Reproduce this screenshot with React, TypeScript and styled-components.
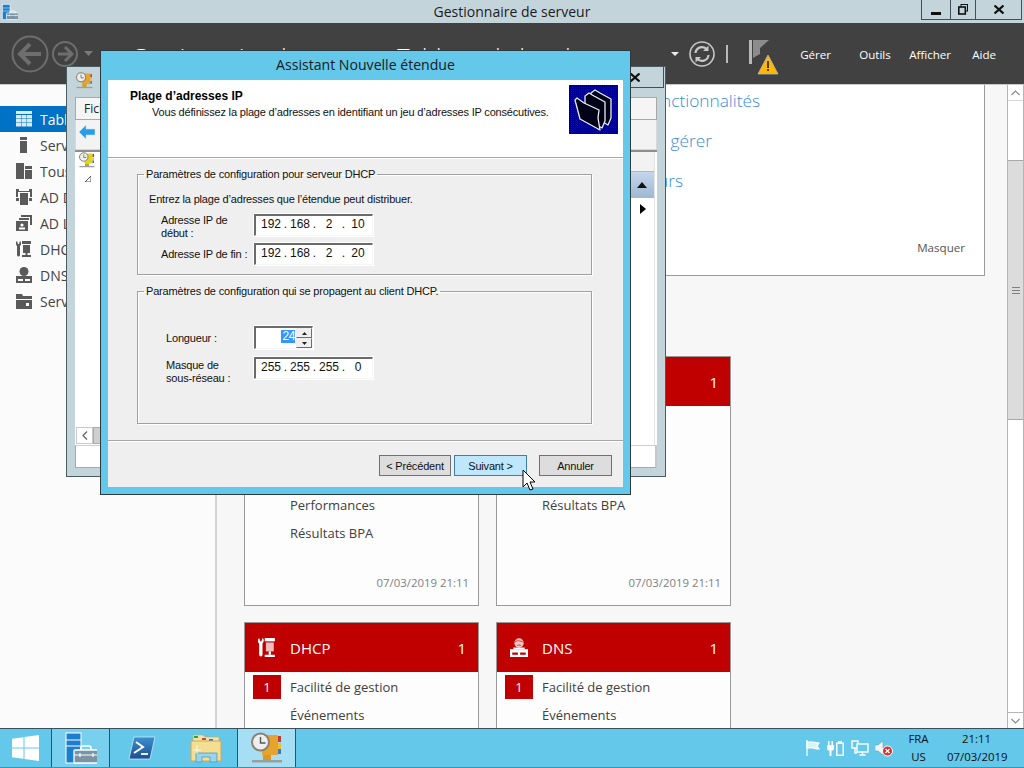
import React from "react";
import styled, { createGlobalStyle } from "styled-components";

const UI = `"Open Sans", "Noto Sans", sans-serif`;
const DLG = `"Liberation Sans", Arial, sans-serif`;

const Global = createGlobalStyle`
  html, body { margin: 0; padding: 0; overflow: hidden; background: #f7f7f7; }
  #root { width: 1024px; height: 768px; }
  * { box-sizing: border-box; }
`;

const Desktop = styled.div`
  position: relative; width: 1024px; height: 768px; overflow: hidden;
  display: flex; flex-direction: column; font-family: ${UI};
`;
const TitleBar = styled.header`
  height: 23px; flex: none; background: #c3d5db; display: grid;
  grid-template-columns: 1fr auto 1fr; align-items: start; color: #1c1c1c;
`;
const TitleIcon = styled.div` padding: 3px 0 0 2px; height: 20px; `;
const TitleText = styled.div` font-size: 14px; line-height: 24px; `;
const Controls = styled.div`
  justify-self: end; margin-right: 2px; height: 20px; display: flex;
  border: 1px solid #3f5058; border-top: 0; color: #111;
`;
const ControlBtn = styled.div<{ $w: number }>`
  width: ${p => p.$w}px; display: flex; align-items: center; justify-content: center;
  & + & { border-left: 1px solid #3f5058; }
`;
const NavBar = styled.nav`
  height: 62px; flex: none; background: #414141; display: flex; align-items: center;
  padding: 0 28px 0 11px; border-bottom: 1px solid #c8c8c8; overflow: hidden;
`;
const NavTitle = styled.div`
  margin-left: 38px; font-size: 23.5px; font-weight: 300; color: #fff; white-space: nowrap;
  display: flex; gap: 12px; line-height: 30px; padding-top: 6px;
`;
const NavRight = styled.div` margin-left: auto; display: flex; align-items: center; `;
const NavCaret = styled.svg` margin-right: 10px; `;
const Divider = styled.div` width: 2px; height: 18px; background: #b9b9b9; margin: 0 21px 0 11px; `;
const FlagIcon = styled.svg` margin-top: 8px; `;
const NavMenu = styled.div`
  display: grid; grid-template-columns: 59px 50px 63px auto; margin-left: 21px; padding-top: 2px;
  color: #fff; font-size: 11.6px;
`;
const Main = styled.div` flex: 1; min-height: 0; display: flex; overflow: hidden; background: #f7f7f7; `;
const Sidebar = styled.aside`
  width: 217px; flex: none; background: #fbfbfb; padding-top: 21px;
  border-right: 2px solid #d2d2d2;
`;
const SideItem = styled.div<{ $active?: boolean }>`
  height: 26px; display: flex; align-items: center; gap: 8px; padding-left: 16px;
  font-size: 14px; white-space: nowrap; overflow: hidden;
  background: ${p => (p.$active ? "#0072c6" : "transparent")};
  color: ${p => (p.$active ? "#fff" : "#444")};
`;
const Content = styled.main` flex: 1; min-width: 0; overflow: hidden; `;
const Welcome = styled.section`
  width: 768px; height: 191px; background: #fff;
  border-right: 1px solid #9a9a9a; border-bottom: 1px solid #9a9a9a;
  display: flex; flex-direction: column; padding-top: 2px; position: relative;
`;
const WelcomeLine = styled.div<{ $end: number }>`
  width: ${p => p.$end}px; height: 40px; line-height: 28px; text-align: right; white-space: nowrap;
  font-size: 17.3px; font-weight: 300; color: #3b8edb;
`;
const HideLink = styled.div`
  margin-top: auto; margin-bottom: 20px; align-self: flex-end; padding-right: 19px;
  font-size: 11.6px; color: #555;
`;
const CardGrid = styled.div`
  display: grid; grid-template-columns: 235px 235px; column-gap: 17px; row-gap: 16px;
  margin: 80px 0 0 27px;
`;
const Card = styled.article`
  height: 250px; background: #fdfdfd; border: 1px solid #999; display: flex; flex-direction: column;
  position: relative;
`;
const CardHead = styled.div`
  height: 49px; flex: none; background: #c00000; color: #fff; display: flex; align-items: center;
  padding: 0 12px 0 13px; font-size: 15px;
`;
const CardIconSlot = styled.span` width: 18px; flex: none; display: flex; `;
const CardTitle = styled.span` margin-left: 14px; flex: 1; `;
const CardRows = styled.div` padding: 1px 0 0 8px; `;
const CardRow = styled.div`
  height: 28px; display: flex; align-items: center; gap: 9px; padding-left: 37px; position: relative;
  font-size: 13px; color: #404040;
`;
const Badge = styled.span`
  position: absolute; left: 0; top: 2px; width: 28px; height: 24px; background: #c00000; color: #fff;
  display: flex; align-items: center; justify-content: center; font-size: 13px;
`;
const Stamp = styled.div`
  margin-top: auto; margin-bottom: 15px; align-self: flex-end; padding-right: 9px;
  font-size: 11.4px; color: #808080;
`;
const Scrollbar = styled.div`
  width: 17px; flex: none; background: #fff; border-left: 1px solid #b5b5b5; border-right: 1px solid #b5b5b5;
  display: flex; flex-direction: column;
`;
const ScrollBtn = styled.div<{ $end?: boolean }>`
  height: 16px; flex: none; display: flex; align-items: center; justify-content: center;
  ${p => (p.$end ? "margin-top: auto; border-top: 1px solid #b5b5b5;" : "border-bottom: 1px solid #d8d8d8;")}
`;
const ScrollGap = styled.div<{ $h: number }>` height: ${p => p.$h}px; flex: none; `;
const ScrollThumb = styled.div`
  height: 260px; background: #dcdcdc; border-top: 1px solid #a8a8a8; border-bottom: 1px solid #a8a8a8; flex: none;
  display: flex; align-items: center; justify-content: center;
`;
const Grip = styled.div`
  width: 8px; height: 7px;
  border-top: 1px solid #808080; border-bottom: 1px solid #808080; position: relative;
  &::after { content: ""; position: absolute; left: 0; right: 0; top: 2px; height: 1px; background: #808080; }
`;
const Taskbar = styled.footer`
  height: 40px; flex: none; background: #64c8ea; border-top: 1px solid #39505a; border-bottom: 1px solid #4b8ca4;
  display: flex; align-items: stretch; color: #111;
`;
const TaskSlot = styled.div<{ $w: number; $state?: "hover" | "active" }>`
  width: ${p => p.$w}px; flex: none; display: flex; align-items: center; justify-content: center;
  background: ${p => (p.$state === "active" ? "#a6dff3" : p.$state === "hover" ? "#78d0ee" : "transparent")};
  ${p => (p.$state ? "box-shadow: inset 1px 0 0 #39505a, inset -1px 0 0 #39505a;" : "")}
`;
const Tray = styled.div` margin-left: auto; display: flex; align-items: center; gap: 6px; `;
const TrayClock = styled.div`
  display: flex; font-size: 11.4px; line-height: 18px; text-align: center; margin-left: 8px; margin-right: 18px;
`;
const TrayLang = styled.div` width: 23px; margin-right: 17px; `;
const TrayTime = styled.div` width: 59px; white-space: nowrap; `;

/* ---------- background MMC ---------- */
const Mmc = styled.section`
  position: absolute; left: 66px; top: 66px; width: 600px; height: 411px; background: #c3d5db;
  border: 1px solid #4b5b62; display: flex; flex-direction: column; padding: 0 8px 8px;
`;
const MmcTop = styled.div` height: 30px; flex: none; display: flex; justify-content: space-between; padding: 5px 0 0 1px; `;
const MmcClose = styled.div`
  width: 58px; height: 21px; margin: -5px -7px 0 0; border: 1px solid #3f5058; border-top: 0;
  display: flex; align-items: center; justify-content: center;
`;
const MmcMenu = styled.div`
  height: 23px; flex: none; background: #f5f5f5; border: 1px solid #a8a8a8; padding: 2px 8px;
  font-size: 12px; color: #222;
`;
const MmcTools = styled.div`
  height: 30px; flex: none; background: #f3f3f3; padding: 5px 3px; border: 1px solid #d8d8d8; border-top: 0;
  & > svg { display: block; }
`;
const MmcPanes = styled.div`
  flex: 1; min-height: 0; display: flex; background: #fff; border-top: 2px solid #8e8e8e;
`;
const TreePane = styled.div` flex: 1; display: flex; flex-direction: column; padding: 0 0 0 4px; `;
const TreeSpacer = styled.div` flex: 1; padding: 8px 0 0 6px; & > svg { display: block; } `;
const HScroll = styled.div` height: 17px; flex: none; margin: 0 0 1px -3px; display: flex; `;
const HScrollBtn = styled.div`
  width: 17px; background: #fff; border: 1px solid #c9c9c9; display: flex; align-items: center; justify-content: center;
`;
const HScrollThumb = styled.div` width: 300px; background: #cfcfcf; border: 1px solid #aaa; `;
const ActionsPane = styled.div`
  width: 120px; flex: none; display: flex; flex-direction: column; border-right: 1px solid #e4e4e4;
  margin-right: 2px; font-size: 12px;
`;
const ActionsHead = styled.div` height: 20px; background: #f2f2f2; border-bottom: 1px solid #b5b5b5; `;
const ActionsRow = styled.div<{ $sel?: boolean }>`
  height: ${p => (p.$sel ? 26 : 22)}px; display: flex; align-items: center; justify-content: flex-end;
  padding-right: ${p => (p.$sel ? 7 : 8)}px;
  background: ${p => (p.$sel ? "linear-gradient(#c4d6ec, #9fb7d3)" : "#fff")};
`;
const Status = styled.div`
  height: 23px; flex: none; margin-top: 0; background: #fff; border: 1px solid #a8a8a8; border-top-color: #cfcfcf;
  border-right: 2px solid #c8c8c8;
`;

/* ---------- dialog ---------- */
const Dialog = styled.section`
  position: absolute; left: 100px; top: 50px; width: 531px; height: 445px; background: #64c8ea;
  border: 1px solid #2c3a40; display: flex; flex-direction: column; padding: 0 7px 7px;
  font-family: ${DLG}; font-size: 11px; letter-spacing: -0.18px; color: #111;
`;
const DlgTitle = styled.div` height: 29px; flex: none; line-height: 28px; text-align: center; font-family: ${UI}; font-size: 14.1px; letter-spacing: 0; color: #1a1a1a; `;
const DlgClient = styled.div` flex: 1; min-height: 0; background: #efefef; display: flex; flex-direction: column; `;
const DlgHeader = styled.div`
  height: 78px; flex: none; background: #fff; display: flex; justify-content: space-between;
  padding: 5px 5px 0 22px; border-bottom: 1px solid #a6a6a6; box-shadow: 0 1px 0 #fff;
  & > svg { flex: none; }
`;
const DlgHeadText = styled.div` padding-top: 4px; `;
const DlgHeadTitle = styled.div` font-weight: 700; font-size: 12px; letter-spacing: 0; line-height: 15px; color: #000; `;
const DlgHeadSub = styled.div` padding-left: 22px; line-height: 17px; white-space: nowrap; `;
const DlgBody = styled.div` flex: 1; padding: 10px 31px 0 29px; display: flex; flex-direction: column; gap: 10px; `;
const Group = styled.fieldset<{ $h: number }>`
  margin: 0; height: ${p => p.$h}px; padding: 0 0 0 11px; min-width: 0;
  border: 1px solid #a0a0a0; box-shadow: 1px 1px 0 #fff, inset 1px 1px 0 #fff;
`;
const GroupLegend = styled.legend` margin-left: -5px; padding: 0 2px; line-height: 13px; white-space: nowrap; `;
const Hint = styled.div` margin-top: 12px; line-height: 13px; `;
const FormRow = styled.div<{ $top: number; $indent: number; $center?: boolean }>`
  margin-top: ${p => p.$top}px; display: grid; grid-template-columns: 105px auto; justify-content: start;
  align-items: ${p => (p.$center ? "center" : "start")};
  & > label { padding-left: ${p => p.$indent}px; }
`;
const FieldLabel = styled.label<{ $pad?: number }>`
  line-height: 13px; height: 22px; white-space: pre-line; padding-top: ${p => p.$pad ?? 0}px;
`;
const FieldLabelCenter = styled.label` line-height: 13.5px; padding-top: 2px; white-space: nowrap; `;
const IpBox = styled.div`
  width: 119px; height: 22px; background: #fff; display: flex; align-items: center; padding: 0 0 3px 3px;
  border-style: solid; border-color: #6b6b6b #f6f6f6 #f6f6f6 #6b6b6b; border-width: 2px 1px 1px 2px;
  outline: 1px solid #fff; font-size: 12px; letter-spacing: 0;
`;
const IpSeg = styled.span` width: 24px; text-align: center; `;
const IpDot = styled.span` width: 5px; text-align: center; `;
const SpinBox = styled.div`
  width: 59px; height: 23px; background: #fff; display: flex; justify-content: flex-end; position: relative;
  border-style: solid; border-color: #6b6b6b #f6f6f6 #f6f6f6 #6b6b6b; border-width: 2px 1px 1px 2px;
  outline: 1px solid #fff; font-size: 12px; letter-spacing: -0.4px;
`;
const SpinValue = styled.span` height: 13px; line-height: 13px; padding: 0 0 0 1px; background: #3399ff; color: #fff; margin-top: 2px; `;
const SpinBtns = styled.div` width: 16px; flex: none; margin-left: 1px; display: flex; flex-direction: column; `;
const SpinBtn = styled.div`
  flex: 1; background: #f0f0f0; border: 1px solid #6e6e6e; border-top-color: #eee; border-left-color: #eee;
  display: flex; align-items: center; justify-content: center;
`;
const DlgFooter = styled.div`
  height: 47px; flex: none; border-top: 1px solid #a6a6a6; box-shadow: inset 0 1px 0 #fff;
  display: flex; justify-content: flex-end; align-items: flex-start; padding: 14px 11px 0 0;
`;
const DlgBtn = styled.div<{ $w: number; $gap: number; $hot?: boolean }>`
  width: ${p => p.$w}px; height: 21px; margin-left: ${p => p.$gap}px; display: flex; align-items: center; justify-content: center;
  background: ${p => (p.$hot ? "#bee6fd" : "#dddddd")}; border: 1px solid ${p => (p.$hot ? "#3c7fb1" : "#707070")};
`;
const Pointer = styled.svg` position: absolute; left: 522px; top: 469px; `;

/* ---------- drawings ---------- */
const ServerMgrIcon = ({ s }: { s: number }) => (
  <svg width={s} height={s} viewBox="0 0 32 32">
    <rect x="1" y="1" width="15" height="30" fill="#1a7fd0" stroke="#fff" strokeWidth="1" />
    <path d="M1 8h15M1 14h15" stroke="#fff" strokeWidth="1" />
    <path d="M16 19v-3a2 2 0 0 1 2-2h6a2 2 0 0 1 2 2v3" fill="none" stroke="#fff" strokeWidth="1.6" />
    <rect x="9" y="18" width="25" height="13" rx="1" fill="#7a93a5" stroke="#fff" strokeWidth="1.3" />
    <path d="M9 23h25M15 21v4M28 21v4" stroke="#fff" strokeWidth="1.2" />
  </svg>
);
const ClockBook = ({ s, tint = "#e6a32e" }: { s: number; tint?: string }) => (
  <svg width={s} height={s} viewBox="0 0 32 32" style={{ flex: "none" }}>
    <rect x="11" y="3" width="16" height="20" rx="1" fill={tint} />
    <rect x="27" y="4" width="3" height="6" fill="#c63a2d" />
    <rect x="27" y="11" width="3" height="6" fill="#e7c12f" />
    <rect x="27" y="17" width="3" height="5" fill="#3d76c5" />
    <circle cx="9.500" cy="10" r="8.500" fill="#eee" stroke="#8a8172" strokeWidth="2" />
    <path d="M9.500 5v6h5" stroke="#555" strokeWidth="1.400" fill="none" />
    <rect x="12" y="23" width="8" height="5" fill="#d79b24" />
    <rect x="1" y="28" width="30" height="2.500" fill="#9aa0a0" />
  </svg>
);
const Ico = ({ children }: { children: React.ReactNode }) => (
  <svg width="16" height="16" viewBox="0 0 16 16" fill="#5a5a5a" style={{ flex: "none" }}>{children}</svg>
);
const SideIcons: React.ReactNode[] = [
  <svg key="0" width="16" height="16" viewBox="0 0 16 16" fill="#dce9f5" style={{ flex: "none" }}><rect y="0" width="16" height="3" /><path d="M0 4h5v3.500H0zM5.500 4h5v3.500h-5zM11 4h5v3.500h-5zM0 8h5v3.500H0zM5.500 8h5v3.500h-5zM11 8h5v3.500h-5zM0 12h5v3.500H0zM5.500 12h5v3.500h-5zM11 12h5v3.500h-5z" /></svg>,
  <Ico key="1"><rect x="4" y="0" width="7" height="3" /><rect x="4" y="4" width="7" height="12" /></Ico>,
  <Ico key="2"><rect x="0" y="0" width="8" height="16" /><rect x="9" y="3" width="7" height="3" /><rect x="9" y="7" width="7" height="9" /></Ico>,
  <Ico key="3"><path d="M0 0h3v2h10V0h3v8h-2V3H2v5H0z" /><rect x="4" y="4" width="8" height="12" /><rect x="0" y="9" width="3" height="3" /><rect x="13" y="9" width="3" height="3" /></Ico>,
  <Ico key="4"><path d="M5 0h11v10h-2V2H5z" /><rect x="3" y="3" width="10" height="2" /><rect x="0" y="6" width="12" height="10" /><circle cx="6" cy="10" r="1.600" fill="#fff" /><rect x="3" y="12.500" width="6" height="2" fill="#fff" /></Ico>,
  <Ico key="5"><path d="M1 0l1 3h1l1-3c1.500 1 1.500 3.500 0 5v9a1.500 1.500 0 0 1-3 0V5C-.5 3.500-.5 1 1 0z" /><rect x="6" y="0" width="9" height="3" /><rect x="7" y="4" width="7" height="8" /><rect x="9.500" y="12" width="2" height="2" /><rect x="6" y="14" width="9" height="2" /></Ico>,
  <Ico key="6"><circle cx="8" cy="4.500" r="4.500" /><rect x="0" y="9" width="16" height="7" /><rect x="2" y="12" width="5" height="2" fill="#fff" /><rect x="9" y="12" width="5" height="2" fill="#fff" /></Ico>,
  <Ico key="7"><path d="M0 1h6l1 2h9v3H0z" /><path d="M0 7h16v9H0z" /><path d="M10 10h3v3h-3z" fill="#fff" /></Ico>,
];
const sideLabels = ["Tableau de bord", "Serveur local", "Tous les serveurs", "AD DS", "AD LDS", "DHCP", "DNS", "Services de fichiers et de stockage"];

const WhiteDhcp = () => (
  <svg width="18" height="19" viewBox="0 0 16 17" fill="#fff" preserveAspectRatio="none"><path d="M1 0l1 3h1l1-3c1.500 1 1.500 3.500 0 5v10a1.500 1.500 0 0 1-3 0V5C-.5 3.500-.5 1 1 0z" /><rect x="6" y="0" width="9" height="3" /><rect x="7" y="4" width="7" height="8" opacity=".75" /><rect x="9.500" y="12" width="2" height="3" /><rect x="6" y="15" width="9" height="2" /></svg>
);
const WhiteDns = () => (
  <svg width="18" height="19" viewBox="0 0 16 17" fill="#fff" preserveAspectRatio="none"><circle cx="8" cy="4.500" r="4.200" fill="#f3c6c6" /><path d="M4 4c2-2 5-2 8 0M6 7c1-1 3-1 4 0" stroke="#c00000" strokeWidth=".6" fill="none" /><rect x="3" y="8.500" width="10" height="1.500" /><rect x="0" y="10" width="16" height="7" /><rect x="2" y="13" width="5" height="2" fill="#c00000" /><rect x="9" y="13" width="5" height="2" fill="#c00000" /></svg>
);

const IP = ({ parts }: { parts: string[] }) => (
  <IpBox>
    {parts.map((p, i) => (
      <React.Fragment key={i}>
        {i > 0 && <IpDot>.</IpDot>}
        <IpSeg>{p}</IpSeg>
      </React.Fragment>
    ))}
  </IpBox>
);

const cards = [
  { t: "AD DS", icon: null as React.ReactNode, rows: ["Facilité de gestion", "Événements", "Services", "Performances", "Résultats BPA"] },
  { t: "AD LDS", icon: null as React.ReactNode, rows: ["Facilité de gestion", "Événements", "Services", "Résultats BPA"] },
  { t: "DHCP", icon: <WhiteDhcp />, rows: ["Facilité de gestion", "Événements", "Services", "Performances", "Résultats BPA"] },
  { t: "DNS", icon: <WhiteDns />, rows: ["Facilité de gestion", "Événements", "Services", "Performances", "Résultats BPA"] },
];

export default function App() {
  return (
    <Desktop>
      <Global />
      <TitleBar>
        <TitleIcon><ServerMgrIcon s={16} /></TitleIcon>
        <TitleText>Gestionnaire de serveur</TitleText>
        <Controls>
          <ControlBtn $w={28}><svg width="10" height="10" viewBox="0 0 10 10"><rect y="7" width="10" height="3" fill="#111" /></svg></ControlBtn>
          <ControlBtn $w={25}><svg width="10" height="11" viewBox="0 0 10 11" fill="none" stroke="#111"><rect x="3" y=".5" width="6.500" height="6.500" /><rect x=".8" y="3" width="6.500" height="7" fill="#c3d5db" strokeWidth="1.600" /></svg></ControlBtn>
          <ControlBtn $w={46}><svg width="10" height="9" viewBox="0 0 10 9" stroke="#111" strokeWidth="2.200"><path d="M.5.500l9 8M9.500.500l-9 8" /></svg></ControlBtn>
        </Controls>
      </TitleBar>
      <NavBar>
        <svg width="38" height="38" viewBox="0 0 38 38" fill="none" stroke="#6e6e6e"><circle cx="19" cy="19" r="17.500" strokeWidth="2" /><path d="M30 19H10M19 9L9 19l10 10" strokeWidth="4" /></svg>
        <svg width="26" height="26" viewBox="0 0 26 26" fill="none" stroke="#6e6e6e" style={{ marginLeft: 3 }}><circle cx="13" cy="13" r="12" strokeWidth="2" /><path d="M6 13h13M13 6l7 7-7 7" strokeWidth="3" /></svg>
        <svg width="9" height="5" viewBox="0 0 9 5" style={{ marginLeft: 6 }}><path d="M0 0h9L4.500 5z" fill="#7a7a7a" /></svg>
        <NavTitle><span>Gestionnaire de serveur</span><span>Tableau de bord</span></NavTitle>
        <NavRight>
          <NavCaret width="8" height="4" viewBox="0 0 8 4"><path d="M0 0h8L4 4z" fill="#eee" /></NavCaret>
          <svg width="26" height="26" viewBox="0 0 26 26" fill="none" stroke="#c8c8c8"><circle cx="13" cy="13" r="12" strokeWidth="1.600" /><path d="M6.500 12a6.500 6.500 0 0 1 11.500-3.500M19.500 14a6.500 6.500 0 0 1-11.500 3.500" strokeWidth="2.200" /><path d="M19.500 4.500v5.500h-5.500zM6.500 21.500V16h5.500z" fill="#c8c8c8" stroke="none" /></svg>
          <Divider />
          <FlagIcon width="30" height="36" viewBox="0 0 30 36"><rect x="0" y="0" width="3" height="24" fill="#b8b8b8" /><path d="M4 0h16l-9 8 0 6-7 4z" fill="#8c8c8c" /><path d="M19 15L29 34H9z" fill="#ffb900" stroke="#b8b8b8" strokeWidth=".8" /><rect x="18.200" y="21" width="1.600" height="7" fill="#222" /><rect x="18.200" y="29" width="1.600" height="2" fill="#222" /></FlagIcon>
          <NavMenu><span>Gérer</span><span>Outils</span><span>Afficher</span><span>Aide</span></NavMenu>
        </NavRight>
      </NavBar>
      <Main>
        <Sidebar>
          {sideLabels.map((l, i) => (
            <SideItem key={l} $active={i === 0}>{SideIcons[i]}<span>{l}</span></SideItem>
          ))}
        </Sidebar>
        <Content>
          <Welcome>
            <WelcomeLine $end={543}>Ajouter des rôles et des fonctionnalités</WelcomeLine>
            <WelcomeLine $end={495}>Ajouter d’autres serveurs à gérer</WelcomeLine>
            <WelcomeLine $end={466}>Créer un groupe de serveurs</WelcomeLine>
            <HideLink>Masquer</HideLink>
          </Welcome>
          <CardGrid>
            {cards.map(c => (
              <Card key={c.t}>
                <CardHead>
                  <CardIconSlot>{c.icon}</CardIconSlot>
                  <CardTitle>{c.t}</CardTitle>
                  <span>1</span>
                </CardHead>
                <CardRows>
                  {c.rows.map((r, i) => (
                    <CardRow key={r}>{i === 0 && <Badge>1</Badge>}{r}</CardRow>
                  ))}
                </CardRows>
                <Stamp>07/03/2019 21:11</Stamp>
              </Card>
            ))}
          </CardGrid>
        </Content>
        <Scrollbar>
          <ScrollBtn><svg width="9" height="6" viewBox="0 0 9 6" fill="none" stroke="#888" strokeWidth="1.200"><path d="M.5 5l4-4 4 4" /></svg></ScrollBtn>
          <ScrollGap $h={59} />
          <ScrollThumb><Grip /></ScrollThumb>
          <ScrollBtn $end><svg width="9" height="6" viewBox="0 0 9 6" fill="none" stroke="#888" strokeWidth="1.200"><path d="M.5 1l4 4 4-4" /></svg></ScrollBtn>
        </Scrollbar>
      </Main>
      <Taskbar>
        <TaskSlot $w={51}>
          <svg width="27" height="26" viewBox="0 0 27 26" fill="#fff"><path d="M0 3.800l11.500-1.600v10.300H0zM12.500 2L27 0v12.500H12.500zM0 13.500h11.500v10.300L0 22.200zM12.500 13.500H27V26l-14.500-2z" /></svg>
        </TaskSlot>
        <TaskSlot $w={59} $state="hover"><ServerMgrIcon s={32} /></TaskSlot>
        <TaskSlot $w={64}>
          <svg width="28" height="24" viewBox="0 0 28 24"><defs><linearGradient id="ps" x1="0" y1="0" x2="0" y2="1"><stop offset="0" stopColor="#3d8fd0" /><stop offset="1" stopColor="#1a4f90" /></linearGradient></defs><path d="M6 1h21l-5 22H1z" fill="url(#ps)" stroke="#cfe4f5" strokeWidth=".8" /><path d="M8 6l7 5-9 6" fill="none" stroke="#fff" strokeWidth="2" /><path d="M13 18h7" stroke="#fff" strokeWidth="1.800" /></svg>
        </TaskSlot>
        <TaskSlot $w={63}>
          <svg width="32" height="30" viewBox="0 0 32 30"><path d="M3 2h10l2 2h14v6H3z" fill="#f3e3ae" stroke="#c9a95a" strokeWidth=".6" /><rect x="4" y="3" width="4" height="2" fill="#2aa52a" /><rect x="12" y="5" width="4" height="2" fill="#d04a2a" /><rect x="19" y="6" width="4" height="2" fill="#2a7fd0" /><path d="M1 8h30v20H1z" fill="#f5dd92" stroke="#cfa950" /><path d="M6 20h21v9h-7v-5h-8v5H6z" fill="#9ad3ea" stroke="#4a9cc4" strokeWidth=".8" /><path d="M7 12v9M3 17h8" stroke="#fff" strokeWidth="1" opacity=".8" /></svg>
        </TaskSlot>
        <TaskSlot $w={59} $state="active"><ClockBook s={32} /></TaskSlot>
        <Tray>
          <svg width="16" height="16" viewBox="0 0 16 16" stroke="#fff" strokeWidth="1.200"><path d="M2 0v16" fill="none" /><path d="M2 2h6c1 0 3 1 6 1l-2 3 2 3c-3 0-5-1-6-1H2z" fill="#d9f2fa" /></svg>
          <svg width="18" height="16" viewBox="0 0 18 16" fill="#fff"><path d="M1 1h1.500v4H1zM4.500 1H6v4H4.500zM0 5h7v3.500a2 2 0 0 1-2.500 2V16H2.500v-5.500A2 2 0 0 1 0 8.500z" /><path d="M11 1h4v1.500h2V16H9V2.500h2zM10.500 4v10.500h5V4z" /></svg>
          <svg width="18" height="16" viewBox="0 0 18 16" fill="none" stroke="#fff" strokeWidth="1.400"><rect x="1" y="1" width="6" height="7" /><path d="M4 8v5h2" /><rect x="6" y="4" width="11" height="8" fill="#64c8ea" /><path d="M11.500 12v2M8.500 15h6" /></svg>
          <svg width="18" height="18" viewBox="0 0 18 18"><path d="M0 6h3l5-4v14l-5-4H0z" fill="#eef8fb" stroke="#7a9aa6" strokeWidth=".6" /><circle cx="12.500" cy="12" r="5" fill="#d93030" stroke="#fff" /><path d="M10.500 10l4 4M14.500 10l-4 4" stroke="#fff" strokeWidth="1.300" /></svg>
          <TrayClock>
            <TrayLang>FRA<br />US</TrayLang>
            <TrayTime>21:11<br />07/03/2019</TrayTime>
          </TrayClock>
        </Tray>
      </Taskbar>

      <Mmc>
        <MmcTop>
          <ClockBook s={17} />
          <MmcClose><svg width="10" height="9" viewBox="0 0 10 9" stroke="#111" strokeWidth="2.200"><path d="M.5.500l9 8M9.500.500l-9 8" /></svg></MmcClose>
        </MmcTop>
        <MmcMenu>Fichier</MmcMenu>
        <MmcTools>
          <svg width="16" height="14" viewBox="0 0 16 14"><path d="M0 7l7-7v4h9v6H7v4z" fill="#2a9be8" stroke="#bfe3f8" strokeWidth=".6" /></svg>
        </MmcTools>
        <MmcPanes>
          <TreePane>
            <ClockBook s={16} tint="#d8d820" />
            <TreeSpacer><svg width="6" height="6" viewBox="0 0 6 6"><path d="M6 0v6H0z" fill="none" stroke="#555" /></svg></TreeSpacer>
            <HScroll>
              <HScrollBtn><svg width="6" height="9" viewBox="0 0 6 9" fill="none" stroke="#666" strokeWidth="1.300"><path d="M5 .5l-4 4 4 4" /></svg></HScrollBtn>
              <HScrollThumb />
            </HScroll>
          </TreePane>
          <ActionsPane>
            <ActionsHead />
            <ActionsRow $sel><svg width="10" height="6" viewBox="0 0 10 6"><path d="M5 0l5 6H0z" fill="#111" /></svg></ActionsRow>
            <ActionsRow><svg width="6" height="10" viewBox="0 0 6 10"><path d="M0 0l6 5-6 5z" fill="#000" /></svg></ActionsRow>
          </ActionsPane>
        </MmcPanes>
        <Status />
      </Mmc>

      <Dialog>
        <DlgTitle>Assistant Nouvelle étendue</DlgTitle>
        <DlgClient>
          <DlgHeader>
            <DlgHeadText>
              <DlgHeadTitle>Plage d’adresses IP</DlgHeadTitle>
              <DlgHeadSub>Vous définissez la plage d’adresses en identifiant un jeu d’adresses IP consécutives.</DlgHeadSub>
            </DlgHeadText>
            <svg width="49" height="49" viewBox="0 0 49 49">
              <defs><pattern id="dither" width="2" height="2" patternUnits="userSpaceOnUse"><rect width="2" height="2" fill="#000" /><rect width="1" height="1" fill="#0000e0" /><rect x="1" y="1" width="1" height="1" fill="#0000a0" /></pattern></defs>
              <rect width="49" height="49" fill="url(#dither)" />
              <g fill="#000018" stroke="#eee" strokeWidth="1.300" strokeLinejoin="round">
                <path d="M22 8l4-3 5 3 11 6 0 19-3 7-17-10z" />
                <path d="M16 11l4-3 5 3 11 6 0 19-3 7-17-10z" />
                <path d="M6 15l2-2 7 5 15 7-1 8 2 12-20-11z" />
              </g>
            </svg>
          </DlgHeader>
          <DlgBody>
            <Group $h={107}>
              <GroupLegend>Paramètres de configuration pour serveur DHCP</GroupLegend>
              <Hint>Entrez la plage d’adresses que l’étendue peut distribuer.</Hint>
              <FormRow $top={8} $indent={12}>
                <FieldLabel>{"Adresse IP de\ndébut :"}</FieldLabel>
                <IP parts={["192", "168", "2", "10"]} />
              </FormRow>
              <FormRow $top={7} $indent={12} $center>
                <FieldLabelCenter>Adresse IP de fin :</FieldLabelCenter>
                <IP parts={["192", "168", "2", "20"]} />
              </FormRow>
            </Group>
            <Group $h={139}>
              <GroupLegend>Paramètres de configuration qui se propagent au client DHCP.</GroupLegend>
              <FormRow $top={28} $indent={17} $center>
                <FieldLabelCenter>Longueur :</FieldLabelCenter>
                <SpinBox>
                  <SpinValue>24</SpinValue>
                  <SpinBtns>
                    <SpinBtn><svg width="5" height="3" viewBox="0 0 5 3"><path d="M2.500 0l2.500 3H0z" fill="#222" /></svg></SpinBtn>
                    <SpinBtn><svg width="5" height="3" viewBox="0 0 5 3"><path d="M0 0h5L2.500 3z" fill="#222" /></svg></SpinBtn>
                  </SpinBtns>
                </SpinBox>
              </FormRow>
              <FormRow $top={8} $indent={17}>
                <FieldLabel $pad={2}>{"Masque de\nsous-réseau :"}</FieldLabel>
                <IP parts={["255", "255", "255", "0"]} />
              </FormRow>
            </Group>
          </DlgBody>
          <DlgFooter>
            <DlgBtn $w={72} $gap={0}>&lt; Précédent</DlgBtn>
            <DlgBtn $w={73} $gap={3} $hot>Suivant &gt;</DlgBtn>
            <DlgBtn $w={73} $gap={12}>Annuler</DlgBtn>
          </DlgFooter>
        </DlgClient>
      </Dialog>
      <Pointer width="14" height="23" viewBox="0 0 14 23"><path d="M1 1v17l4-4 3 7 3-1-3-7h5z" fill="#fff" stroke="#000" strokeWidth="1" /></Pointer>
    </Desktop>
  );
}
